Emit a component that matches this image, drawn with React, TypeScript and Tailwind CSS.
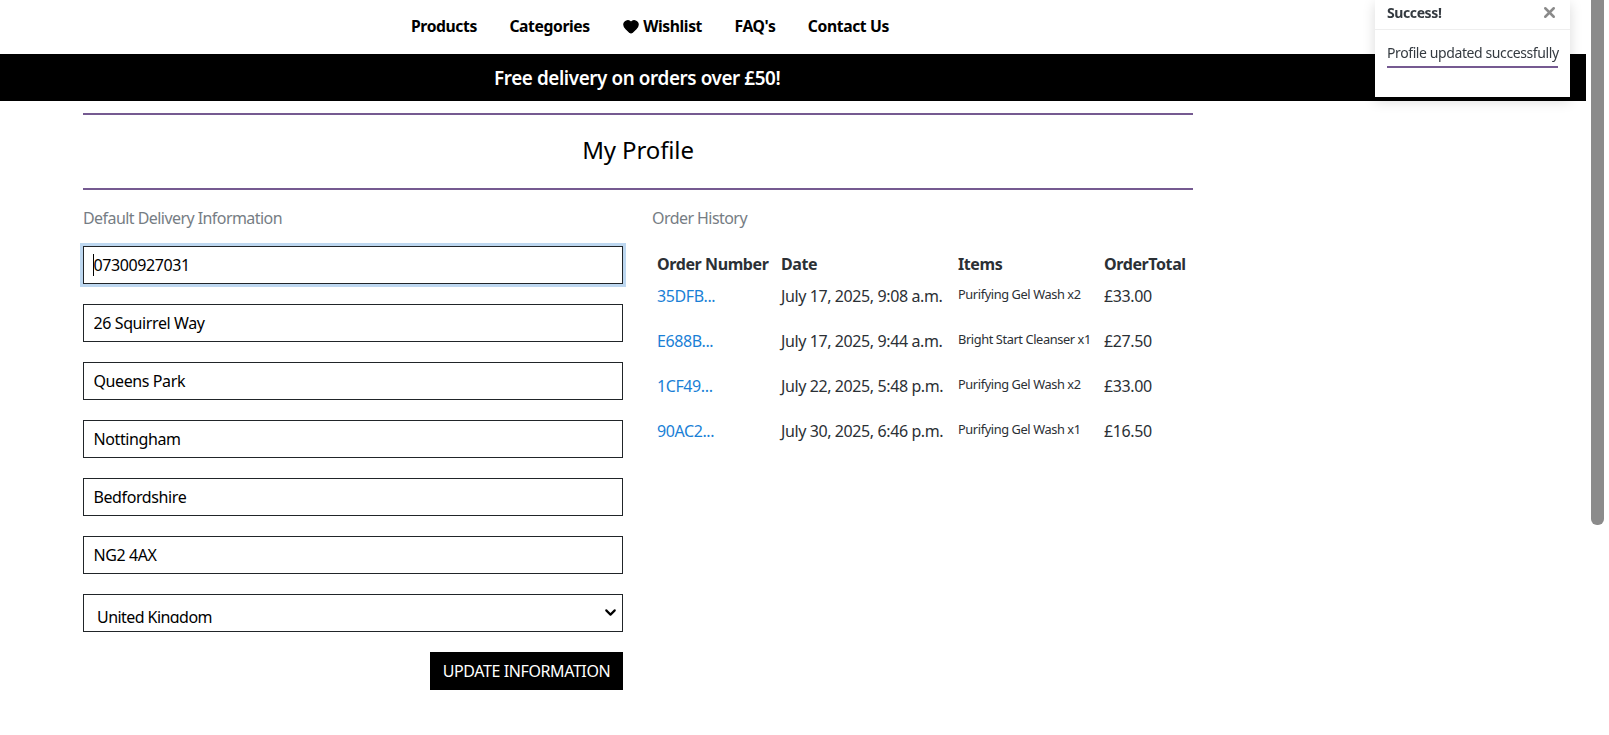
import { ChevronDown, Heart, X } from "lucide-react";

const fields = ["07300927031", "26 Squirrel Way", "Queens Park", "Nottingham", "Bedfordshire", "NG2 4AX"];

const orders = [
  { id: "35DFB...", date: "July 17, 2025, 9:08 a.m.", items: "Purifying Gel Wash x2", total: "£33.00" },
  { id: "E688B...", date: "July 17, 2025, 9:44 a.m.", items: "Bright Start Cleanser x1", total: "£27.50" },
  { id: "1CF49...", date: "July 22, 2025, 5:48 p.m.", items: "Purifying Gel Wash x2", total: "£33.00" },
  { id: "90AC2...", date: "July 30, 2025, 6:46 p.m.", items: "Purifying Gel Wash x1", total: "£16.50" },
];

export default function App() {
  return (
    <div className="flex h-[735px] overflow-hidden bg-white font-['Noto_Sans',sans-serif] text-[16px] text-[#2b3035] tracking-[-0.025em]">
      <div className="w-[1586px] shrink-0">
        {/* nav */}
        <nav className="flex h-[54px] items-center gap-[32.5px] pl-[411px] text-[15.7px] font-bold text-black">
          <a>Products</a>
          <a>Categories</a>
          <a className="flex items-center gap-[3px]">
            <Heart className="h-[17px] w-[18px] fill-black text-black" />
            Wishlist
          </a>
          <a>FAQ's</a>
          <a>Contact Us</a>
        </nav>

        {/* banner */}
        <div className="flex h-[47px] items-center pl-[494px] pt-[1px] text-[18.85px] font-semibold text-white bg-black">
          Free delivery on orders over £50!
        </div>

        <main className="ml-[83px] w-[1110px]">
          <div className="mt-[12px] flex h-[77px] items-center justify-center border-y-2 border-[#755a91] pb-[4px] text-[24px] tracking-[-0.005em] text-black">
            My Profile
          </div>

          <div className="mt-[19px] flex">
            {/* form */}
            <div className="w-[540px]">
              <h2 className="mb-[18px] h-[19px] leading-[19px] tracking-[-0.035em] text-[#767d84]">Default Delivery Information</h2>
              <div className="flex flex-col gap-[20px]">
                {fields.map((value, i) => (
                  <div key={value} className="relative">
                    <input
                      defaultValue={value}
                      className={
                        i === 0
                          ? "h-[38px] w-full border border-[#212529] px-[9.5px] text-black outline-none shadow-[0_0_0_3px_#bdd7f0]"
                          : "h-[38px] w-full border border-[#212529] px-[9.5px] text-black outline-none"
                      }
                    />
                    {i === 0 && <span className="absolute left-[10px] top-[8px] h-[22px] w-px bg-black" />}
                  </div>
                ))}
                <div className="relative h-[38px] border border-[#212529] px-[13px] tracking-[-0.035em] text-black">
                  <div className="h-[28px] overflow-hidden pt-[10px] leading-[24px]">United Kingdom</div>
                  <ChevronDown className="absolute right-[3px] top-[9px] h-[17px] w-[17px] text-black" strokeWidth={3} />
                </div>
              </div>
              <div className="mt-[20px] flex justify-end">
                <button className="h-[38px] w-[193px] bg-black text-[16px] text-white">UPDATE INFORMATION</button>
              </div>
            </div>

            {/* orders */}
            <div className="ml-[29px] w-[541px]">
              <h2 className="mb-[18px] h-[19px] leading-[19px] tracking-[-0.035em] text-[#767d84]">Order History</h2>
              <table className="w-full table-fixed border-collapse">
                <thead>
                  <tr className="h-[35px] text-left">
                    <th className="w-[124px] pl-[5px] font-bold">Order Number</th>
                    <th className="w-[177px] pl-[5px] font-bold">Date</th>
                    <th className="w-[146px] pl-[5px] font-bold">Items</th>
                    <th className="pl-[5px] font-bold">OrderTotal</th>
                  </tr>
                </thead>
                <tbody>
                  {orders.map((order) => (
                    <tr key={order.id + order.date} className="h-[45px] align-top">
                      <td className="pl-[5px] pt-[3px] text-[#1a7fd6]">{order.id}</td>
                      <td className="pl-[5px] pt-[3px] whitespace-nowrap">{order.date}</td>
                      <td className="pl-[5px] pt-[4px] text-[12.8px] whitespace-nowrap">{order.items}</td>
                      <td className="pl-[5px] pt-[3px]">{order.total}</td>
                    </tr>
                  ))}
                </tbody>
              </table>
            </div>
          </div>
        </main>
      </div>

      {/* scrollbar */}
      <div className="ml-[5px] w-[13px]">
        <div className="h-[525px] rounded-b-[6px] bg-[#8b8b8b]" />
      </div>

      {/* toast */}
      <div className="fixed right-[39px] top-0 h-[97px] w-[195px] bg-white shadow-[0_4px_12px_rgba(0,0,0,0.15)]">
        <div className="flex h-[30px] items-center justify-between border-b border-[#eeeeee] px-[12px] pb-[5px] text-[14px] font-bold text-[#343a40]">
          Success!
          <X className="h-[17px] w-[17px] text-[#8a8a8a]" strokeWidth={3.5} />
        </div>
        <div className="mx-[12px] mt-[12px] border-b-2 border-[#755a91] pb-[3px] text-[14px] leading-[21px] text-[#343a40] whitespace-nowrap">
          Profile updated successfully
        </div>
      </div>
    </div>
  );
}
